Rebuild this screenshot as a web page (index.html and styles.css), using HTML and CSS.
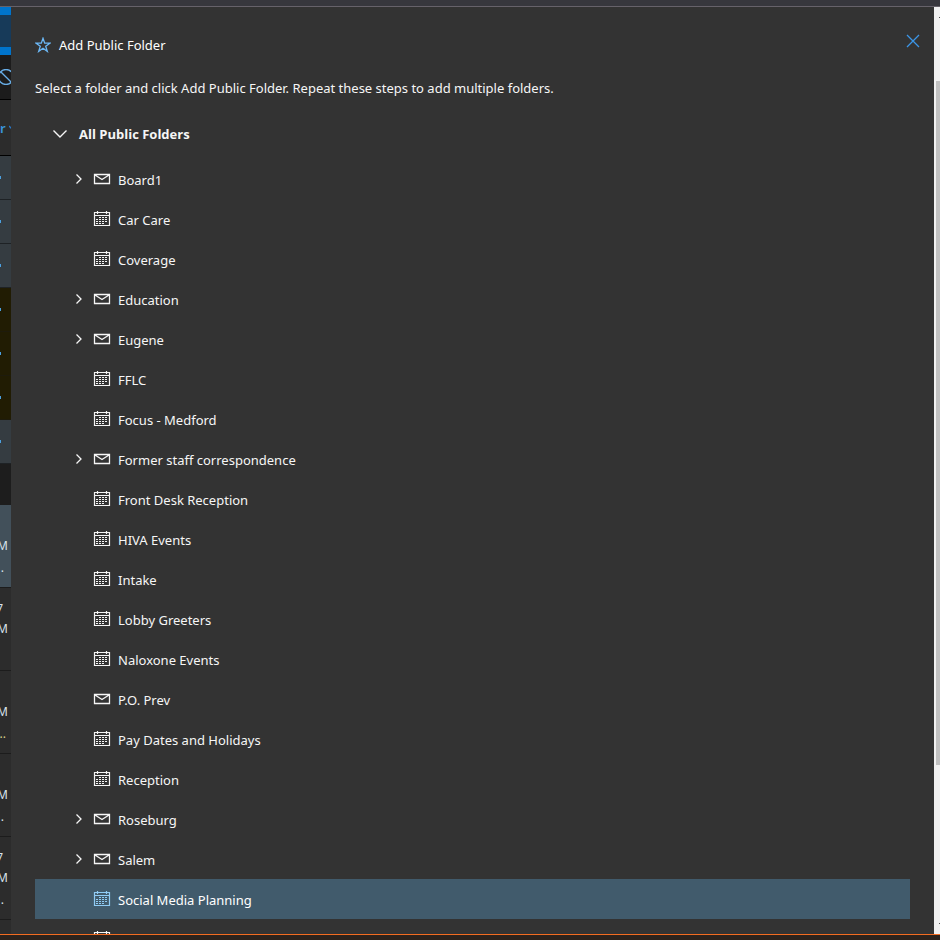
FILE: index.html
```html
<!DOCTYPE html>
<html lang="en">
<head>
<meta charset="utf-8">
<title>Add Public Folder</title>
<link rel="stylesheet" href="styles.css">
</head>
<body>
<svg class="sprite" aria-hidden="true">
  <symbol id="mail" viewBox="0 0 18 18"><path d="M1.500 4.500h15v9h-15zM2 5l7 4.500L16 5" fill="none" stroke="currentColor" stroke-width="1.300"/></symbol>
  <symbol id="calendar" viewBox="0 0 18 18"><path d="M1.500 2.500h15v13h-15zM1 5.500h16M4.500 1v3M13.500 1v3" fill="none" stroke="currentColor" stroke-width="1.200"/><path d="M6 7.500h9M3 9.500h12M3 11.500h12M3 13.500h9" fill="none" stroke="currentColor" stroke-dasharray="2 1"/></symbol>
  <symbol id="chevron" viewBox="0 0 10 12"><path d="M2.500 1.500L7 6l-4.500 4.500" fill="none" stroke="currentColor" stroke-width="1.300"/></symbol>
</svg>
<div class="window">
  <header class="titlebar"></header>
  <div class="workspace">
    <aside class="mailbox">
      <div class="brand"></div>
      <div class="tools"><svg width="16" height="16" viewBox="0 0 16 16"><circle cx="8" cy="8" r="7.500"/><path d="M2.700 2.700l10.600 10.600"/></svg></div>
      <div class="filter"><span>r</span><svg width="8" height="6" viewBox="0 0 8 6"><path d="M0 1l4 4 4-4"/></svg></div>
      <div class="line unread"><i></i></div>
      <div class="line unread"><i></i></div>
      <div class="line unread"><i></i></div>
      <div class="line flagged"><i></i></div>
      <div class="line flagged"><i></i></div>
      <div class="line flagged"><i></i></div>
      <div class="line unread"><i></i></div>
      <div class="group"></div>
      <div class="message active"><span></span><span>M</span><span class="dots">.</span></div>
      <div class="message"><span class="digit">7</span><span>M</span><span></span></div>
      <div class="message"><span></span><span>M</span><span class="dots gold">..</span></div>
      <div class="message"><span></span><span>M</span><span class="dots">.</span></div>
      <div class="message"><span class="digit">7</span><span>M</span><span class="dots">.</span></div>
      <div class="message"></div>
    </aside>
    <main class="dialog">
      <div class="heading">
        <svg class="star" width="16" height="16" viewBox="0 0 16 16"><path d="M8 1.300l1.700 4.900h5.200l-4.200 3.100 1.600 5.100L8 11.300l-4.300 3.100 1.600-5.100L1.100 6.200h5.200z"/></svg>
        <h1>Add Public Folder</h1>
        <button class="close" aria-label="Close"><svg width="14" height="14" viewBox="0 0 14 14"><path d="M1 1l12 12M13 1L1 13"/></svg></button>
      </div>
      <p class="help">Select a folder and click Add Public Folder. Repeat these steps to add multiple folders.</p>
      <button class="root" aria-expanded="true"><svg width="16" height="10" viewBox="0 0 16 10"><path d="M1.500 1.500L8 8l6.500-6.500"/></svg>All Public Folders</button>
      <ul class="tree">
        <li><button class="toggle" aria-label="Expand Board1"><svg><use href="#chevron"/></svg></button><svg class="icon"><use href="#mail"/></svg><span>Board1</span></li>
        <li><svg class="icon"><use href="#calendar"/></svg><span>Car Care</span></li>
        <li><svg class="icon"><use href="#calendar"/></svg><span>Coverage</span></li>
        <li><button class="toggle" aria-label="Expand Education"><svg><use href="#chevron"/></svg></button><svg class="icon"><use href="#mail"/></svg><span>Education</span></li>
        <li><button class="toggle" aria-label="Expand Eugene"><svg><use href="#chevron"/></svg></button><svg class="icon"><use href="#mail"/></svg><span>Eugene</span></li>
        <li><svg class="icon"><use href="#calendar"/></svg><span>FFLC</span></li>
        <li><svg class="icon"><use href="#calendar"/></svg><span>Focus - Medford</span></li>
        <li><button class="toggle" aria-label="Expand Former staff correspondence"><svg><use href="#chevron"/></svg></button><svg class="icon"><use href="#mail"/></svg><span>Former staff correspondence</span></li>
        <li><svg class="icon"><use href="#calendar"/></svg><span>Front Desk Reception</span></li>
        <li><svg class="icon"><use href="#calendar"/></svg><span>HIVA Events</span></li>
        <li><svg class="icon"><use href="#calendar"/></svg><span>Intake</span></li>
        <li><svg class="icon"><use href="#calendar"/></svg><span>Lobby Greeters</span></li>
        <li><svg class="icon"><use href="#calendar"/></svg><span>Naloxone Events</span></li>
        <li><svg class="icon"><use href="#mail"/></svg><span>P.O. Prev</span></li>
        <li><svg class="icon"><use href="#calendar"/></svg><span>Pay Dates and Holidays</span></li>
        <li><svg class="icon"><use href="#calendar"/></svg><span>Reception</span></li>
        <li><button class="toggle" aria-label="Expand Roseburg"><svg><use href="#chevron"/></svg></button><svg class="icon"><use href="#mail"/></svg><span>Roseburg</span></li>
        <li><button class="toggle" aria-label="Expand Salem"><svg><use href="#chevron"/></svg></button><svg class="icon"><use href="#mail"/></svg><span>Salem</span></li>
        <li class="selected"><svg class="icon"><use href="#calendar"/></svg><span>Social Media Planning</span></li>
        <li><svg class="icon"><use href="#calendar"/></svg></li>
      </ul>
    </main>
    <div class="scrollbar"><i class="up"></i><div class="thumb"></div><div class="track"></div><i class="down"></i></div>
  </div>
  <footer class="edge"></footer>
</div>
</body>
</html>
```

FILE: styles.css
```css
* { box-sizing: border-box; }
body {
  margin: 0;
  background: #333;
  color: #f6f6f6;
  font: 13px/20px "Noto Sans", "Open Sans", sans-serif;
}
button { padding: 0; border: 0; background: none; color: inherit; font: inherit; }
svg { display: block; flex: none; }
.sprite { position: absolute; width: 0; height: 0; }
.window { display: flex; flex-direction: column; height: 100vh; overflow: hidden; }
.titlebar { flex: none; height: 7px; background: #37373d; border-bottom: 1px solid #66626a; }
.workspace { flex: 1; min-height: 0; display: grid; grid-template-columns: 11px minmax(0, 1fr) 6px; grid-template-rows: minmax(0, 1fr); }
.edge { flex: none; height: 6px; background: #2c231d; border-top: 1px solid #f36c21; }

/* Mail list behind the dialog */
.mailbox { display: flex; flex-direction: column; overflow: hidden; background: #2c2c2c; }
.mailbox > * { flex: none; overflow: hidden; }
.brand { height: 48px; background: #173a59; border: solid #0074cc; border-width: 8px 0; }
.tools { height: 45px; padding-top: 14px; background: #1c1c1c; border-bottom: 1px solid #000; display: flex; justify-content: flex-end; }
.tools svg { margin-right: -3px; fill: none; stroke: #68aee8; stroke-width: 1.3; }
.filter { height: 56px; display: flex; align-items: center; gap: 3px; border-bottom: 1px solid #000; color: #3a96dd; font-weight: 600; }
.filter svg { fill: none; stroke: #2878c8; stroke-width: 1.3; }
.line { height: 44px; padding-top: 20px; border-bottom: 1px solid #1e2225; }
.line i { display: block; width: 1px; height: 3px; background: #4ba0e0; }
.unread { background: #353c41; }
.flagged { background: #211c03; border-color: #1e1b0c; }
.group { height: 41px; background: #1d1d1d; }
.message { height: 83px; padding: 11px 3px 0 0; border-bottom: 1px solid #1c1c1c; display: flex; flex-direction: column; align-items: flex-end; font-size: 12px; color: #d8e2ea; }
.message span { height: 20px; }
.message .digit { margin-right: 5px; }
.message .dots { margin-right: 4px; line-height: 24px; }
.message .gold { color: #d9cf8a; margin-right: 2px; }
.active { background: #42505a; }

/* Dialog */
.dialog { overflow: hidden; padding: 16px 24px 0; }
.heading { display: flex; align-items: center; height: 44px; gap: 8px; }
.heading h1 { margin: 0; font-size: 13px; font-weight: 400; color: #fff; }
.star { fill: none; stroke: #6cb8f6; stroke-width: 1.3; }
.close { margin: 0 -10px 8px auto; }
.close svg { fill: none; stroke: #3b96e8; stroke-width: 1.3; }
.help { margin: 11px 0 0; }
.root { display: flex; align-items: center; gap: 11px; height: 20px; margin: 26px 0 0 17px; font-family: "Open Sans", sans-serif; font-weight: 700; }
.root svg { fill: none; stroke: currentColor; stroke-width: 1.4; }
.tree { list-style: none; margin: 15px 0 0; padding: 0; }
.tree li { display: grid; grid-template-columns: 19px 18px 1fr; align-items: center; height: 40px; padding: 2px 0 0 39px; }
.tree .icon { grid-column: 2; width: 18px; height: 18px; margin-bottom: 2px; }
.tree span { grid-column: 3; margin-left: 7px; }
.toggle svg { width: 10px; height: 12px; margin-bottom: 2px; }
.selected { background: #415b6c; color: #fff; }
.selected .icon { color: #90ccf5; }

.scrollbar { display: flex; flex-direction: column; overflow: hidden; background: #f1f1f1; }
.scrollbar i { flex: none; align-self: flex-end; width: 1px; height: 1px; background: #505050; }
.up { margin: 10px 0 63px; }
.thumb { flex: 684; width: 4px; margin-left: 2px; background: #c1c1c1; }
.track { flex: 158; }
.down { margin-bottom: 10px; }
```
